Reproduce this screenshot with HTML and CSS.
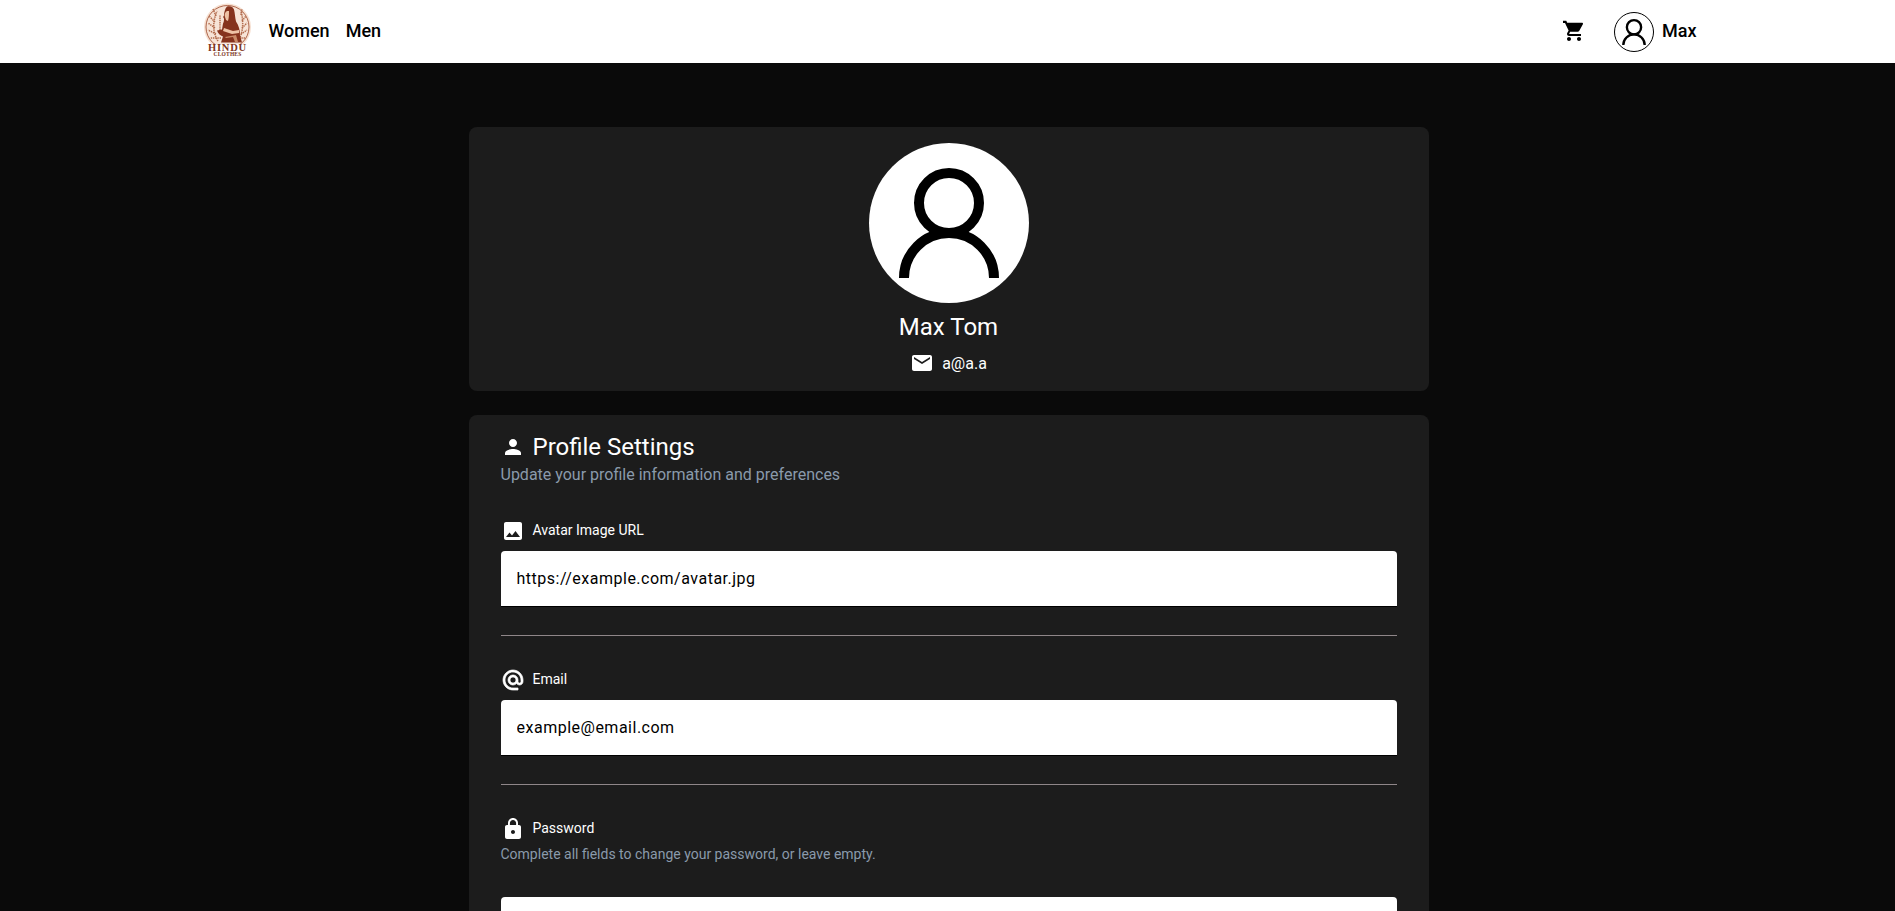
FILE: index.html
```html
<!DOCTYPE html>
<html lang="en">
<head>
  <meta charset="UTF-8" />
  <meta name="viewport" content="width=device-width, initial-scale=1.0"/>
  <title>Profile</title>
  <link rel="stylesheet" href="styles.css">
</head>
<body>
  <svg class="sprites" width="0" height="0">
    <symbol id="userGlyph" viewBox="0 0 160 160">
      <circle cx="80" cy="60" r="30" fill="none" stroke="currentColor" stroke-width="10"/>
      <path d="M35 135a45 45 0 0 1 90 0" fill="none" stroke="currentColor" stroke-width="10"/>
    </symbol>
  </svg>

  <header class="topbar">
    <div class="topbar-inner">
      <svg class="logo" viewBox="0 0 47 57">
        <circle cx="23.5" cy="24" r="23.5" fill="#f6e0d1"/>
        <circle cx="23.5" cy="24" r="21.5" fill="#f7e4d7" stroke="#a5573b" stroke-width="0.9"/>
        <!-- tree branches behind the figure -->
        <g fill="none" stroke="#b26c4d" stroke-width="1.5" stroke-dasharray="1.4 0.8">
          <path d="M14 38C9 30 8 20 13 8"/>
          <path d="M12 31L4 27M11 25L4 20M11 19L5 13M12 13L9 6M17 35L6 35M16 27L16 12"/>
          <path d="M34 38C39 30 40 20 37 8"/>
          <path d="M37 31L43 27M38 25L43 20M38 18L42 13M37 12L38 6M33 35L41 35"/>
        </g>
        <!-- woman in a sari -->
        <path d="M23 3.5c3-1 6 0 7 3 1 4 1 8 2 12 3 4 4 9 4 14l2 7H17l2-6c-3-1-5-3-6-6l5-1 1-6c1-2 1-3 1-5-1-1-1-2 0-3 0-3 1-7 3-9z" fill="#86331d"/>
        <path d="M23 8c-2 1-3 4-2 6l1 3 2 1c1-3 1-7 1-10z" fill="#eec3a6"/>
        <path d="M20 25l9 3 6-1 0 3-7 1-9-3z" fill="#eec3a6"/>
        <path d="M21 34l11-2 2 7h-3l-2-5-7 1z" fill="#c98a68"/>
        <rect x="5" y="41" width="37" height="16" fill="#fff"/>
        <text class="logo-name" x="23.5" y="48" text-anchor="middle">HINDU</text>
        <text class="logo-sub" x="23.5" y="53" text-anchor="middle">CLOTHES</text>
      </svg>
      <nav class="main-nav">
        <a href="#">Women</a>
        <a href="#">Men</a>
      </nav>
      <div class="spacer"></div>
      <svg class="cart-icon" viewBox="0 0 24 24"><path d="M7 18c-1.1 0-1.99.9-1.99 2S5.9 22 7 22s2-.9 2-2-.9-2-2-2zM1 2v2h2l3.6 7.59-1.35 2.45c-.16.28-.25.61-.25.96 0 1.1.9 2 2 2h12v-2H7.42c-.14 0-.25-.11-.25-.25l.03-.12.9-1.83h7.45c.75 0 1.41-.41 1.75-1.03l3.58-6.47c.08-.14.12-.31.12-.48 0-.55-.45-1-1-1H5.21l-.94-2H1zm16 16c-1.1 0-1.99.9-1.99 2s.89 2 1.99 2 2-.9 2-2-.9-2-2-2z"/></svg>
      <div class="user-chip">
        <svg class="user-avatar" viewBox="0 0 160 160"><use href="#userGlyph"/></svg>
        <span class="user-name">Max</span>
      </div>
    </div>
  </header>

  <main class="container">
    <section class="card profile-card">
      <svg class="big-avatar" viewBox="0 0 160 160"><use href="#userGlyph"/></svg>
      <h2 class="profile-name">Max Tom</h2>
      <div class="profile-mail">
        <svg class="icon" viewBox="0 0 24 24"><path d="M20 4H4c-1.1 0-1.99.9-1.99 2L2 18c0 1.1.9 2 2 2h16c1.1 0 2-.9 2-2V6c0-1.1-.9-2-2-2zm0 4l-8 5-8-5V6l8 5 8-5v2z"/></svg>
        <span>a@a.a</span>
      </div>
    </section>

    <section class="card settings-card">
      <div class="settings-title">
        <svg class="icon" viewBox="0 0 24 24"><path d="M12 12c2.21 0 4-1.79 4-4s-1.79-4-4-4-4 1.79-4 4 1.79 4 4 4zm0 2c-2.67 0-8 1.34-8 4v2h16v-2c0-2.66-5.33-4-8-4z"/></svg>
        <h2>Profile Settings</h2>
      </div>
      <p class="hint hint-large">Update your profile information and preferences</p>

      <div class="field">
        <label class="field-label">
          <svg class="icon" viewBox="0 0 24 24"><path d="M21 19V5c0-1.1-.9-2-2-2H5c-1.1 0-2 .9-2 2v14c0 1.1.9 2 2 2h14c1.1 0 2-.9 2-2zM8.5 13.5l2.5 3.01L14.5 12l4.5 6H5l3.5-4.5z"/></svg>
          <span class="label-text">Avatar Image URL</span>
        </label>
        <input class="text-input" type="text" placeholder="https://example.com/avatar.jpg">
      </div>
      <hr class="divider">

      <div class="field">
        <label class="field-label">
          <svg class="icon icon-heavy" viewBox="0 0 24 24"><path d="M12 2C6.48 2 2 6.48 2 12s4.48 10 10 10h5v-2h-5c-4.34 0-8-3.66-8-8s3.66-8 8-8 8 3.66 8 8v1.43c0 .79-.71 1.57-1.5 1.57s-1.5-.78-1.5-1.57V12c0-2.76-2.24-5-5-5s-5 2.24-5 5 2.24 5 5 5c1.38 0 2.64-.56 3.54-1.47.65.89 1.77 1.47 2.96 1.47 1.97 0 3.5-1.6 3.5-3.57V12c0-5.52-4.48-10-10-10zm0 13c-1.66 0-3-1.34-3-3s1.34-3 3-3 3 1.34 3 3-1.34 3-3 3z"/></svg>
          <span class="label-text">Email</span>
        </label>
        <input class="text-input" type="text" placeholder="example@email.com">
      </div>
      <hr class="divider">

      <div class="field">
        <label class="field-label">
          <svg class="icon" viewBox="0 0 24 24"><path d="M18 8h-1V6c0-2.76-2.24-5-5-5S7 3.24 7 6v2H6c-1.1 0-2 .9-2 2v10c0 1.1.9 2 2 2h12c1.1 0 2-.9 2-2V10c0-1.1-.9-2-2-2zm-6 9c-1.1 0-2-.9-2-2s.9-2 2-2 2 .9 2 2-.9 2-2 2zm3.1-9H8.9V6c0-1.71 1.39-3.1 3.1-3.1 1.71 0 3.1 1.39 3.1 3.1v2z"/></svg>
          <span class="label-text">Password</span>
        </label>
        <p class="hint hint-small">Complete all fields to change your password, or leave empty.</p>
        <input class="text-input password-input" type="password">
      </div>
    </section>
  </main>
</body>
</html>
```

FILE: styles.css
```css
html, body {
  height: 100%;
  overflow: hidden;
}

body {
  margin: 0;
  background-color: #0a0a0a;
  color: #fff;
  font-family: Roboto, sans-serif;
}

.sprites {
  display: none;
}

.topbar {
  background-color: #fff;
  color: #000;
  height: 63px;
}

.topbar-inner {
  max-width: 1536px;
  margin: auto;
  height: 100%;
  padding: 0 19px 0 24px;
  box-sizing: border-box;
  display: flex;
  align-items: center;
}

.logo {
  width: 47px;
  height: 57px;
  flex: none;
}

.logo-name {
  font-family: "Liberation Serif", serif;
  font-size: 10.5px;
  font-weight: bold;
  letter-spacing: 0.8px;
  fill: #7d3420;
}

.logo-sub {
  font-family: "Liberation Serif", serif;
  font-size: 5.5px;
  font-weight: bold;
  letter-spacing: 0.2px;
  fill: #7d3420;
}

.main-nav {
  display: flex;
  gap: 16px;
  margin-left: 18px;
  padding-bottom: 2px;
}

.main-nav a {
  color: #000;
  text-decoration: none;
  font-size: 18px;
  font-weight: 500;
}

.spacer {
  flex: 1;
}

.cart-icon {
  width: 24px;
  height: 24px;
  margin-bottom: 2px;
}

.user-chip {
  display: flex;
  align-items: center;
  gap: 8px;
  margin-left: 28px;
  font-size: 18px;
  font-weight: 500;
}

.user-name {
  padding-bottom: 2px;
}

.user-avatar {
  width: 40px;
  height: 40px;
  border: 1px solid #000;
  border-radius: 50%;
  box-sizing: border-box;
}

.container {
  width: 960px;
  margin: 64px auto 0;
  padding-left: 2px;
  display: flex;
  flex-direction: column;
  gap: 24px;
}

.card {
  background-color: #1c1c1c;
  border-radius: 8px;
}

.profile-card {
  height: 264px;
  padding-top: 16px;
  box-sizing: border-box;
  display: flex;
  flex-direction: column;
  align-items: center;
}

.big-avatar {
  width: 160px;
  height: 160px;
  flex: none;
  border-radius: 50%;
  background-color: #fff;
  color: #000;
}

.profile-name {
  margin: 8px 0 0;
  font-size: 24px;
  font-weight: 400;
  line-height: 32px;
}

.profile-mail {
  display: flex;
  align-items: center;
  gap: 8px;
  margin-top: 8px;
  font-size: 16px;
}

.icon {
  width: 24px;
  height: 24px;
  fill: currentColor;
  flex: none;
}

.icon-heavy {
  stroke: currentColor;
  stroke-width: 0.7;
}

.settings-card {
  padding: 16px 32px 32px;
}

.settings-title {
  display: flex;
  align-items: center;
  gap: 8px;
}

.settings-title h2 {
  margin: 0;
  font-size: 24px;
  font-weight: 400;
  line-height: 32px;
}

.hint {
  margin: 0;
  color: #8a9aab;
}

.hint-large {
  font-size: 16px;
  line-height: 24px;
}

.hint-small {
  margin-top: -5px;
  font-size: 14px;
  line-height: 20px;
}

.field {
  padding-top: 32px;
}

.field-label {
  display: flex;
  align-items: center;
  gap: 8px;
  font-size: 14px;
  line-height: 24px;
  margin-bottom: 8px;
}

.label-text {
  line-height: 22px;
  padding-bottom: 2px;
}

.text-input {
  display: block;
  width: 100%;
  height: 56px;
  padding: 0 16px;
  box-sizing: border-box;
  border: none;
  border-bottom: 1px solid #000;
  border-radius: 4px 4px 0 0;
  background-color: #fff;
  font-family: Roboto, sans-serif;
  font-size: 16px;
  letter-spacing: 0.5px;
  outline: none;
}

.text-input::placeholder {
  color: #000;
  opacity: 1;
}

.password-input {
  margin-top: 33px;
}

.divider {
  margin: 28px 0 0;
  border: none;
  border-top: 1px solid #8f8689;
}
```
